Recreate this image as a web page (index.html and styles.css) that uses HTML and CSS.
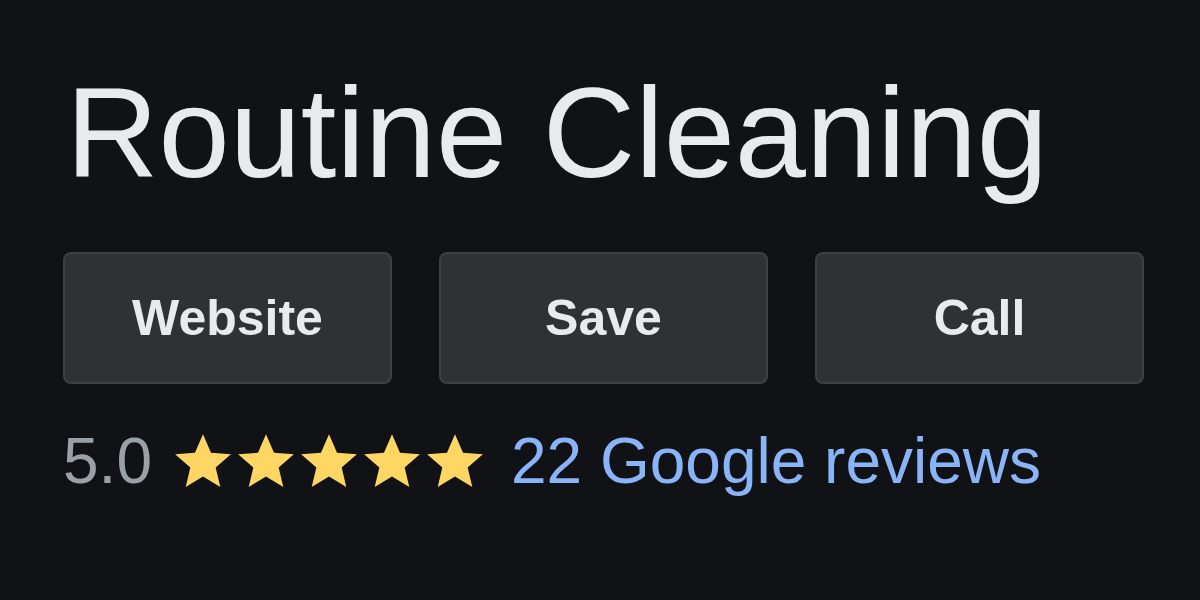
FILE: index.html
```html
<!DOCTYPE html>
<html lang="en">

<head>
    <meta charset="UTF-8">
    <meta name="viewport" content="width=device-width, initial-scale=1.0">
    <title>Routine Cleaning</title>
    <link rel="stylesheet" href="styles.css">
</head>

<body>
    <div class="panel">
        <h1 class="title">Routine Cleaning</h1>

        <div class="actions">
            <button class="action">Website</button>
            <button class="action">Save</button>
            <button class="action">Call</button>
        </div>

        <div class="rating">
            <span class="score">5.0</span>
            <span class="stars">
                <svg class="star" viewBox="0 0 24 24"><path d="M12 1.6l3.1 7.2 7.7.6-5.9 5.1 1.8 7.6L12 18l-6.7 4.1 1.8-7.6-5.9-5.1 7.7-.6z"/></svg>
                <svg class="star" viewBox="0 0 24 24"><path d="M12 1.6l3.1 7.2 7.7.6-5.9 5.1 1.8 7.6L12 18l-6.7 4.1 1.8-7.6-5.9-5.1 7.7-.6z"/></svg>
                <svg class="star" viewBox="0 0 24 24"><path d="M12 1.6l3.1 7.2 7.7.6-5.9 5.1 1.8 7.6L12 18l-6.7 4.1 1.8-7.6-5.9-5.1 7.7-.6z"/></svg>
                <svg class="star" viewBox="0 0 24 24"><path d="M12 1.6l3.1 7.2 7.7.6-5.9 5.1 1.8 7.6L12 18l-6.7 4.1 1.8-7.6-5.9-5.1 7.7-.6z"/></svg>
                <svg class="star" viewBox="0 0 24 24"><path d="M12 1.6l3.1 7.2 7.7.6-5.9 5.1 1.8 7.6L12 18l-6.7 4.1 1.8-7.6-5.9-5.1 7.7-.6z"/></svg>
            </span>
            <a class="reviews" href="#">22 Google reviews</a>
        </div>
    </div>
</body>

</html>
```

FILE: styles.css
```css
body {
    margin: 0;
    background: #111216;
    font-family: "Liberation Sans", Arial, sans-serif;
    color: #e8eaed;
    height: 100vh;
}

.panel {
    padding: 69px 0 0 63px;
}

.title {
    margin: 0 0 55px 3px;
    font-size: 128px;
    font-weight: normal;
    line-height: 1;
    color: #e8eaed;
}

.actions {
    display: flex;
    gap: 47px;
}

.action {
    width: 329px;
    height: 132px;
    background: #303134;
    border: 2px solid #3e4044;
    border-radius: 8px;
    color: #e8eaed;
    font-family: "Liberation Sans", Arial, sans-serif;
    font-size: 50px;
    font-weight: bold;
    padding: 0;
}

.rating {
    display: flex;
    align-items: center;
    margin-top: 45px;
    font-size: 64px;
    line-height: 1;
}

.score {
    color: #9aa0a6;
    margin-right: 20px;
}

.stars {
    display: flex;
    gap: 1px;
    margin-right: 25px;
}

.star {
    width: 62px;
    height: 62px;
    fill: #fdd663;
}

.reviews {
    color: #8ab4f8;
    text-decoration: none;
}
```
